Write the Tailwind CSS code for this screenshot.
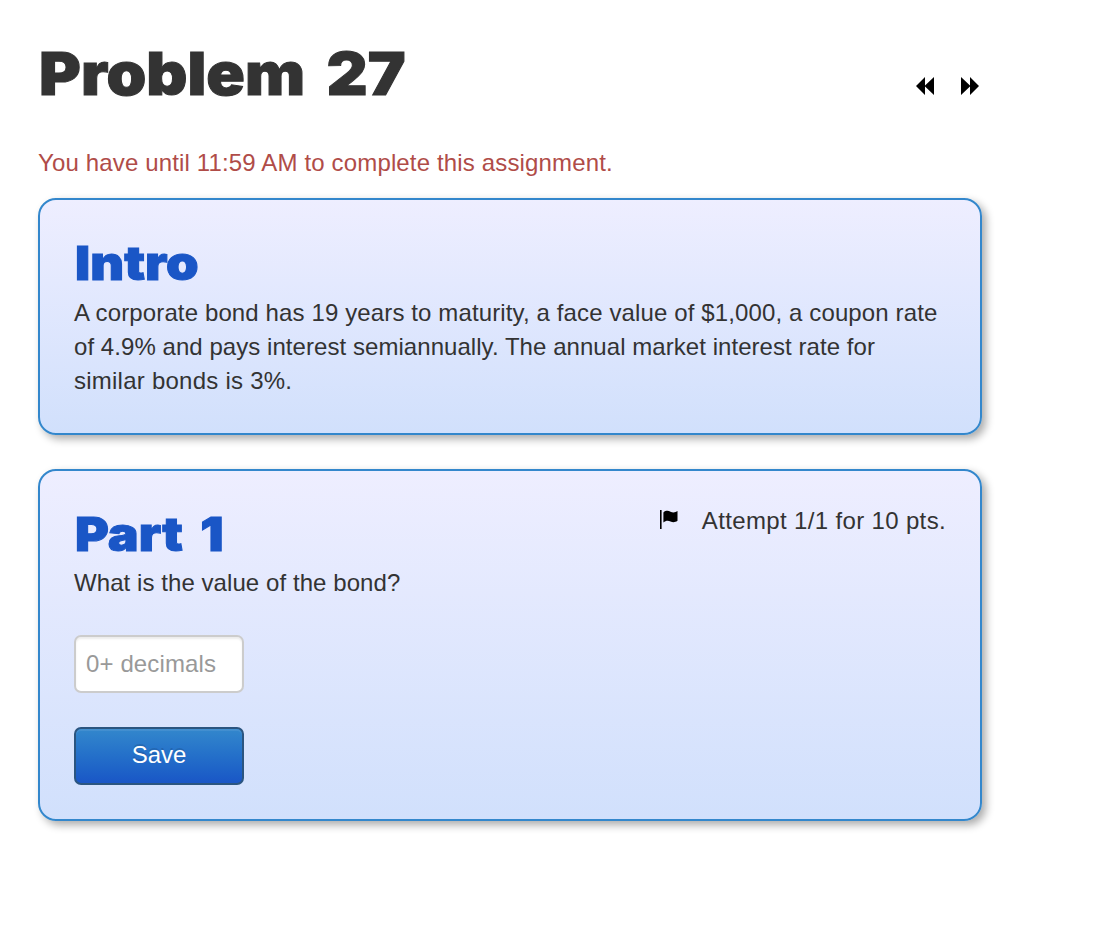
<!DOCTYPE html>
<html lang="en">

<head>
  <meta charset="UTF-8" />
  <meta name="viewport" content="width=device-width, initial-scale=1.0" />
  <title>Problem 27</title>
  <script src="https://cdn.jsdelivr.net/npm/@tailwindcss/browser@4"></script>
</head>

<body class="min-h-screen bg-white text-[#333333] font-['Liberation_Sans',Arial,sans-serif] text-[24px] leading-[34px]">
  <main class="ml-[38px] w-[944px] pt-[34px] pb-[34px]">
    <header class="flex justify-between h-[112px]">
      <h1 class="pl-[1px] origin-left scale-x-[1.08] font-['Inter',sans-serif] font-black text-[59px] leading-[79px] [word-spacing:8px] [-webkit-text-stroke:1px_#333333] whitespace-nowrap">Problem 27</h1>
      <nav class="flex gap-[27px] pt-[43px] pr-[3px]">
        <a href="#" aria-label="Previous">
          <svg class="w-[18px] h-[18px]" viewBox="0 0 18 18"><path d="M0 9 9 0v18zM8.500 9l9.500-9v18z" /></svg>
        </a>
        <a href="#" aria-label="Next">
          <svg class="w-[18px] h-[18px]" viewBox="0 0 18 18"><path d="M18 9 9 0v18zM9.500 9 0 0v18z" /></svg>
        </a>
      </nav>
    </header>

    <p class="text-[#b04c48] tracking-[0.15px] whitespace-nowrap">You have until 11:59 AM to complete this assignment.</p>

    <!-- Intro -->
    <section class="mt-[18px] h-[237px] rounded-[18px] border-2 border-[#3387cc] bg-linear-to-b from-[#eeeeff] to-[#d1e0fc] shadow-[4px_4px_8px_rgba(0,0,0,0.33)] px-[34px] pt-[32px]">
      <h2 class="pl-[1px] mb-[2px] origin-left scale-x-[1.11] font-['Inter',sans-serif] font-black text-[47px] leading-[62px] [-webkit-text-stroke:1px_#1a56c6] text-[#1a56c6]">Intro</h2>
      <p class="whitespace-nowrap"><span class="tracking-[0.125px]">A corporate bond has 19 years to maturity, a face value of $1,000, a coupon rate</span><br /><span class="tracking-[0.055px]">of 4.9% and pays interest semiannually. The annual market interest rate for</span><br /><span class="tracking-[0.24px]">similar bonds is 3%.</span></p>
    </section>

    <!-- Part 1 -->
    <section class="mt-[34px] h-[352px] rounded-[18px] border-2 border-[#3387cc] bg-linear-to-b from-[#eeeeff] to-[#d1e0fc] shadow-[4px_4px_8px_rgba(0,0,0,0.33)] px-[34px] pt-[32px]">
      <div class="flex justify-between">
        <h2 class="pl-[1px] origin-left scale-x-[1.1] font-['Inter',sans-serif] font-black text-[47px] leading-[62px] [word-spacing:6.5px] [-webkit-text-stroke:1px_#1a56c6] text-[#1a56c6]">Part 1</h2>
        <div class="flex items-start gap-[24px] pt-[1px]">
          <svg class="w-[18px] h-[19px] mt-[6px]" viewBox="0 0 18 19">
            <path d="M0 0h1.6v19H0z" />
            <path d="M3.400 2.400C6 .2 8.500 .6 10.500 1.700 13 3 15.500 2.500 17.500 1v9.800c-2.500 1.800-4.700 1.800-7 .7-2.500-1.200-4.700-1-7.100 1z" />
          </svg>
          <span class="tracking-[0.35px] whitespace-nowrap">Attempt 1/1 for 10 pts.</span>
        </div>
      </div>
      <p class="mt-[1px] tracking-[0.07px]">What is the value of the bond?</p>
      <input type="text" placeholder="0+ decimals" class="block mt-[35px] w-[170px] h-[58px] px-[10px] rounded-[7px] border-2 border-[#cccccc] bg-white tracking-[0.12px] placeholder:text-[#999999] shadow-[inset_0_2px_2px_rgba(0,0,0,0.075)]" />
      <button class="block mt-[34px] w-[170px] h-[58px] pb-[2px] rounded-[7px] border-2 border-[#2b5580] bg-linear-to-b from-[#3387cc] to-[#1a56c6] text-white shadow-[inset_0_2px_0_rgba(255,255,255,0.08)] text-shadow-[0_-2px_0_rgba(0,0,0,0.12)]">Save</button>
    </section>
  </main>
</body>

</html>
